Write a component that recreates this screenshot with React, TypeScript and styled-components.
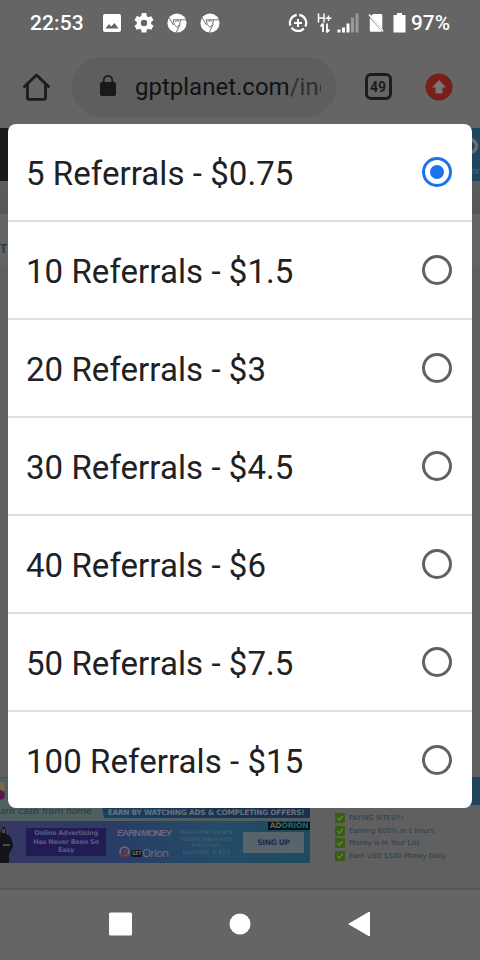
import React from "react";
import styled, { createGlobalStyle } from "styled-components";

const GlobalStyle = createGlobalStyle`
  * { box-sizing: border-box; }
  body { margin: 0; background: #656565; font-family: Roboto, sans-serif; }
`;

const Screen = styled.div`
  position: relative;
  width: 480px;
  height: 960px;
  overflow: hidden;
  display: flex;
  flex-direction: column;
  background: #656565;
`;

const StatusBar = styled.header`
  height: 45px;
  flex: none;
  display: flex;
  align-items: center;
  justify-content: space-between;
  padding: 0 29px 0 30px;
  color: #fff;
`;

const StatusGroup = styled.div<{ $gap: number }>`
  display: flex;
  align-items: center;
  gap: ${(p) => p.$gap}px;
  svg { display: block; flex: none; }
`;

const Clock = styled.span`
  width: 57px;
  margin-right: 3px;
  font-size: 21px;
  line-height: 24px;
  font-weight: 500;
  letter-spacing: 0.1px;
  white-space: nowrap;
`;

const Battery = styled(Clock)`
  width: 40px;
  margin: 0 0 0 -4px;
  font-size: 20.8px;
  letter-spacing: 0;
`;

const Toolbar = styled.div`
  height: 83px;
  flex: none;
  display: flex;
  align-items: center;
  padding: 0 26px 0 22px;
  svg { display: block; flex: none; }
`;

const AddressBar = styled.div`
  width: 264px;
  height: 60px;
  margin: 0 28.5px 0 22px;
  padding: 0 14px 0 27px;
  border-radius: 30px;
  background: #5e5e5e;
  display: flex;
  align-items: center;
  gap: 18px;
`;

const Address = styled.div`
  width: 186px;
  overflow: hidden;
  white-space: nowrap;
  font-size: 24px;
  line-height: 34px;
  color: #121212;
  span { color: #303030; }
`;

const TabCount = styled.div`
  width: 27px;
  height: 27px;
  margin-right: 33px;
  border: 3px solid #1c1c1c;
  border-radius: 6px;
  display: flex;
  align-items: center;
  justify-content: center;
  font-size: 14px;
  font-weight: 700;
  color: #1c1c1c;
`;

const Page = styled.main`
  height: 762px;
  flex: none;
  display: flex;
  flex-direction: column;
  background: #606060;
  border-bottom: 2px solid #575757;
`;

const SiteHeader = styled.div`
  height: 53px;
  flex: none;
  display: flex;
  justify-content: space-between;
  background: #1b1b1b;
`;

const HeaderAd = styled.div`
  width: 240px;
  background: #20465f;
  display: flex;
  flex-direction: column;
  align-items: flex-end;
  justify-content: space-between;
  overflow: hidden;
  padding: 8px 0 5px;
  font: 9px/10px "Open Sans", sans-serif;
  color: #45667b;
  svg { display: block; }
`;

const Strip = styled.div`
  height: 33px;
  flex: none;
  background: linear-gradient(#5e5e5e, #555);
`;

const PageHeading = styled.div`
  height: 52px;
  flex: none;
  display: flex;
  align-items: center;
  padding-top: 16px;
  background: #646464;
  font: 700 12px "Open Sans", sans-serif;
  color: #253e50;
`;

const Body = styled.div`
  flex: 1;
  display: flex;
  align-items: flex-end;
  justify-content: space-between;
  padding-bottom: 25px;
`;

const Banners = styled.div`
  width: 310px;
  height: 86px;
  display: flex;
  flex-direction: column;
  gap: 3px;
  background: #4e5e61;
`;

const TopBanner = styled.div`
  height: 41px;
  flex: none;
  display: flex;
  align-items: stretch;
  border-top: 1px solid #35545a;
  background: #4f6060;
`;

const CashLine = styled.div`
  width: 97px;
  display: flex;
  flex-direction: column;
  justify-content: space-between;
  font: italic 9.1px/12px "DejaVu Sans", sans-serif;
  color: #293637;
  white-space: nowrap;
  padding: 2px 0 1px;
  svg { display: block; }
`;

const OfferLine = styled.div`
  flex: 1;
  display: flex;
  align-items: flex-end;
  justify-content: center;
  padding: 0 0 0 5px;
  background: linear-gradient(90deg, #193f64, #1a3151 65%, #1c2e4e);
  clip-path: polygon(0 0, 100% 0, 100% 100%, 7px 100%);
  font: 700 7.4px/10px "DejaVu Sans", sans-serif;
  letter-spacing: -0.25px;
  color: #66737b;
  white-space: nowrap;
`;

const AdBanner = styled.div`
  height: 42px;
  flex: none;
  display: flex;
  overflow: hidden;
  background: linear-gradient(90deg, #363762, #293d66 38%, #244b67 70%, #1d4b60);
  svg { display: block; flex: none; }
`;

const AdClaim = styled.div`
  width: 80px;
  height: 28px;
  flex: none;
  margin: 7px 12px 0 7px;
  display: flex;
  align-items: center;
  justify-content: center;
  text-align: center;
  background: #211c54;
  color: #5c5b80;
  font: 700 6.5px/8.5px "DejaVu Sans", sans-serif;
  letter-spacing: -0.25px;
  white-space: nowrap;
`;

const AdMoney = styled.div`
  width: 59px;
  flex: none;
  margin-left: -1px;
  padding-top: 6px;
  white-space: nowrap;
  font: 700 9.6px/12px "Liberation Sans", sans-serif;
  letter-spacing: -1.1px;
  color: #6c657e;
`;

const OrionLogo = styled.div`
  display: flex;
  align-items: center;
  padding: 4px 0 0 2px;
  height: 22px;
  font: 11px "Open Sans", sans-serif;
  letter-spacing: -0.6px;
  color: #6d7280;
`;

const LogoChip = styled.b`
  margin-top: 3px;
  background: #10141d;
  color: #777;
  border-radius: 2px;
  font-size: 5px;
  line-height: 7px;
  letter-spacing: 0;
  padding: 0 1px;
`;

const AdCopy = styled.div`
  width: 60px;
  flex: none;
  padding: 8px 0 0;
  text-align: center;
  white-space: nowrap;
  font: 6.3px/6.6px "DejaVu Sans", sans-serif;
  letter-spacing: -0.1px;
  color: #3e6472;
`;

const AdAction = styled.div`
  flex: 1;
  display: flex;
  flex-direction: column;
  align-items: flex-end;
`;

const AdBrand = styled.div`
  width: 42px;
  height: 8px;
  margin-top: 1px;
  background: #080d10;
  color: #666;
  font: 700 7.6px/8px "DejaVu Sans", sans-serif;
  letter-spacing: -0.2px;
  text-align: center;
  white-space: nowrap;
  span { color: #087378; }
`;

const SignUp = styled.div`
  width: 61px;
  height: 21px;
  margin: 2px 6px 0 0;
  background: #58636b;
  color: #292757;
  font: 700 7.6px/21px "DejaVu Sans", sans-serif;
  letter-spacing: -0.4px;
  text-align: center;
`;

const SideColumn = styled.div`
  width: 145px;
  height: 86px;
  display: flex;
  flex-direction: column;
`;

const SideTitle = styled.div`
  height: 28px;
  flex: none;
  margin-bottom: 6.5px;
  background: #20445c;
`;

const CheckRow = styled.div`
  height: 12.7px;
  flex: none;
  display: flex;
  align-items: center;
  gap: 4px;
  font: 7px/10px "DejaVu Sans", sans-serif;
  letter-spacing: -0.05px;
  color: #263d50;
  white-space: nowrap;
  svg { display: block; flex: none; }
`;

const NavBar = styled.nav`
  flex: 1;
  display: flex;
  justify-content: center;
  align-items: center;
  gap: 97px;
  padding: 0 1px 2px 0;
  svg { display: block; }
`;

const Dialog = styled.div`
  position: absolute;
  top: 124px;
  left: 8px;
  width: 464px;
  height: 684px;
  overflow: hidden;
  background: #fff;
  border-radius: 8px;
`;

const Option = styled.div`
  height: 98px;
  display: flex;
  align-items: center;
  justify-content: space-between;
  padding: 0 20px 0 18px;
  border-bottom: 2px solid #dfdfdf;
  &:last-child { height: 96px; border-bottom: 0; }
`;

const OptionLabel = styled.span`
  padding-top: 4px;
  font-size: 33px;
  line-height: 40px;
  letter-spacing: 0.06px;
  white-space: nowrap;
  color: #202124;
`;

const Radio = styled.span<{ $checked: boolean }>`
  width: 30px;
  height: 30px;
  border: 3px solid ${(p) => (p.$checked ? "#1a73e8" : "#606164")};
  border-radius: 50%;
  display: flex;
  align-items: center;
  justify-content: center;
  &::after {
    content: "";
    width: 14px;
    height: 14px;
    border-radius: 50%;
    background: ${(p) => (p.$checked ? "#1a73e8" : "transparent")};
  }
`;

const ChromeIcon = () => (
  <svg width="20" height="20" viewBox="0 0 20 20">
    <circle cx="10" cy="10" r="9.6" fill="#fff" />
    <g fill="none" stroke="#656565" strokeWidth="0.9">
      <path d="M6.2 6.8h12.6M6.2 6.8q.3 5.6 3.8 7.6 3.2-2.2 3.8-7.6M6.4 12 2.2 4.9M13.2 11.5 9.2 19.5" />
      <path d="M7.8 8.3q2.2-1.1 4.4 0" />
    </g>
  </svg>
);

const options = [
  "5 Referrals - $0.75",
  "10 Referrals - $1.5",
  "20 Referrals - $3",
  "30 Referrals - $4.5",
  "40 Referrals - $6",
  "50 Referrals - $7.5",
  "100 Referrals - $15",
];

const benefits = [
  "PAYING SITES!!!",
  "Earning 600% in 1 hours",
  "Money is In Your List",
  "Earn USD $100 Money Daily",
];

export default function App() {
  return (
    <>
      <GlobalStyle />
      <Screen>
        <StatusBar>
          <StatusGroup $gap={13}>
            <Clock>22:53</Clock>
            <svg width="18" height="18" viewBox="3 3 18 18">
              <path fill="#fff" d="M21 19V5a2 2 0 0 0-2-2H5a2 2 0 0 0-2 2v14a2 2 0 0 0 2 2h14a2 2 0 0 0 2-2zM5.5 17.5 9 13l2.2 2.5L14.5 12l4 5.5z" />
            </svg>
            <svg width="20" height="20" viewBox="2 2 20 20">
              <path fill="#fff" d="M19.14 12.94c.04-.3.06-.61.06-.94s-.02-.64-.07-.94l2.03-1.58a.49.49 0 0 0 .12-.61l-1.92-3.32a.49.49 0 0 0-.59-.22l-2.39.96a7 7 0 0 0-1.62-.94l-.36-2.54A.48.48 0 0 0 13.92 2h-3.84a.47.47 0 0 0-.47.41l-.36 2.54c-.59.24-1.13.57-1.62.94l-2.39-.96a.47.47 0 0 0-.59.22L2.74 8.87a.46.46 0 0 0 .12.61l2.03 1.58a5.8 5.8 0 0 0 0 1.88l-2.03 1.58a.49.49 0 0 0-.12.61l1.92 3.32c.12.22.37.29.59.22l2.39-.96c.5.38 1.03.7 1.62.94l.36 2.54c.05.24.24.41.48.41h3.84c.24 0 .44-.17.47-.41l.36-2.54c.59-.24 1.13-.56 1.62-.94l2.39.96c.22.08.47 0 .59-.22l1.92-3.32a.47.47 0 0 0-.12-.61zM12 15.2a3.2 3.2 0 1 1 0-6.4 3.2 3.2 0 0 1 0 6.4z" />
            </svg>
            <ChromeIcon />
            <ChromeIcon />
          </StatusGroup>
          <StatusGroup $gap={9}>
            <svg width="20" height="20" viewBox="0 0 20 20" fill="none" stroke="#fff">
              <path strokeWidth="2.2" d="M11.3 1.8A8.2 8.2 0 0 1 17.3 13.6M15.9 15.6A8.2 8.2 0 0 1 3.5 14.6M2.4 12.6A8.2 8.2 0 0 1 8.7 1.8" />
              <path strokeWidth="2" d="M10 6v8M6 10h8" />
            </svg>
            <svg width="42" height="22" viewBox="0 0 42 22" fill="none" stroke="#fff">
              <path strokeWidth="1.5" d="M1.5 1.5v9M7 1.5v9M1.5 6H7M8.5 6.2h6M11.5 3.4V9" />
              <path strokeWidth="1.8" d="M6 20v-8.5m-2.5 3L6 11.5M10 11.5V20.5m2.5-3L10 20.5" />
              <path strokeWidth="3" d="M22 20.5v-3M26.5 20.5v-5M31 20.5v-9" />
              <path strokeWidth="3" stroke="#999" d="M35.5 20.5v-15M40 20.5V1.5" />
            </svg>
            <svg width="16" height="20" viewBox="0 0 16 20">
              <path fill="#fff" d="m3 3 2-2h8q1.3 0 1.3 1.3V16zM1.8 4.8l12.3 14H3.2q-1.4 0-1.4-1.4z" />
              <path stroke="#fff" strokeWidth="1.6" d="m1 1.5 14 16.7" />
            </svg>
            <svg width="13" height="20" viewBox="0 0 13 20">
              <path fill="#fff" d="M4 0h5v2h3.5v17.5H.5V2H4z" />
            </svg>
            <Battery>97%</Battery>
          </StatusGroup>
        </StatusBar>
        <Toolbar>
          <svg width="28" height="28" viewBox="0 0 28 28" fill="none" stroke="#1c1c1c" strokeWidth="2.8" strokeLinejoin="round">
            <path d="M1.5 14.5 14.5 2 27.5 14.5M5.5 11.5V25.3q0 1 1 1h16q1 0 1-1V11.5" />
          </svg>
          <AddressBar>
            <svg width="18" height="23" viewBox="0 0 18 23">
              <rect x="1" y="7" width="16" height="14" rx="2" fill="#191919" />
              <path d="M4.7 8V5.2a4.3 4.3 0 0 1 8.6 0V8" fill="none" stroke="#191919" strokeWidth="1.8" />
            </svg>
            <Address>gptplanet.com<span>/ind</span></Address>
          </AddressBar>
          <TabCount>49</TabCount>
          <svg width="28" height="28" viewBox="0 0 28 28">
            <circle cx="14" cy="14" r="13.5" fill="#791f1a" />
            <path fill="#777" d="m14 7 7 7.5h-3.5v6h-7v-6H7z" />
          </svg>
        </Toolbar>
        <Page>
          <SiteHeader>
            <span />
            <HeaderAd>
              <svg width="16" height="20" viewBox="0 0 16 20">
                <circle cx="6" cy="10" r="6.5" fill="none" stroke="#6c6c6c" strokeWidth="3.5" />
              </svg>
              or
            </HeaderAd>
          </SiteHeader>
          <Strip />
          <PageHeading>T</PageHeading>
          <Body>
            <Banners>
              <TopBanner>
                <CashLine>
                  <svg width="8" height="24" viewBox="0 0 8 24">
                    <circle cx="0" cy="7" r="5" fill="#736b4c" />
                    <circle cx="0" cy="15" r="5" fill="#5c1745" />
                  </svg>
                  arn cash from home
                </CashLine>
                <OfferLine>EARN BY WATCHING ADS &amp; COMPLETING OFFERS!</OfferLine>
              </TopBanner>
              <AdBanner>
                <svg width="19" height="42" viewBox="0 0 19 42">
                  <path fill="#121418" d="M1 9q3-6 5 0v4q7 2 7 13l-4 7v9H0V14z" />
                  <path fill="#554543" d="M2 8h3v4H2zM3 23h7v2H3z" />
                </svg>
                <AdClaim>Online Advertising<br />Has Never Been So<br />Easy</AdClaim>
                <AdMoney>
                  EARN MONEY
                  <OrionLogo>
                    <svg width="12" height="14" viewBox="0 0 12 14" fill="none">
                      <circle cx="5.5" cy="6.5" r="4.4" stroke="#6e6777" strokeWidth="1.8" />
                      <path d="M1 9q5 5 9 1" stroke="#762f42" strokeWidth="2" />
                      <circle cx="6" cy="6.5" r="2" fill="#753742" />
                    </svg>
                    <LogoChip>GET</LogoChip>Orion
                  </OrionLogo>
                </AdMoney>
                <AdCopy>Real-time reward<br />Instant payments<br />minimum<br />payment is $10</AdCopy>
                <AdAction>
                  <AdBrand>AD<span>ORION</span></AdBrand>
                  <SignUp>SING UP</SignUp>
                </AdAction>
              </AdBanner>
            </Banners>
            <SideColumn>
              <SideTitle />
              {benefits.map((benefit) => (
                <CheckRow key={benefit}>
                  <svg width="10" height="10" viewBox="0 0 10 10">
                    <rect width="10" height="10" rx="1" fill="#365f13" />
                    <path d="m2.5 5 2 2 3-4" fill="none" stroke="#6b7c49" strokeWidth="1.3" />
                  </svg>
                  {benefit}
                </CheckRow>
              ))}
            </SideColumn>
          </Body>
        </Page>
        <NavBar>
          <svg width="23" height="24" viewBox="0 0 23 24"><rect y="0.5" width="23" height="23" rx="1.5" fill="#fff" /></svg>
          <svg width="22" height="24" viewBox="0 0 22 24"><circle cx="11" cy="12" r="10.5" fill="#fff" /></svg>
          <svg width="22" height="24" viewBox="0 0 22 24"><path fill="#fff" d="M0 12 20.5 0H22v24h-1.5z" /></svg>
        </NavBar>
        <Dialog>
          {options.map((label, index) => (
            <Option key={label}>
              <OptionLabel>{label}</OptionLabel>
              <Radio $checked={index === 0} />
            </Option>
          ))}
        </Dialog>
      </Screen>
    </>
  );
}
